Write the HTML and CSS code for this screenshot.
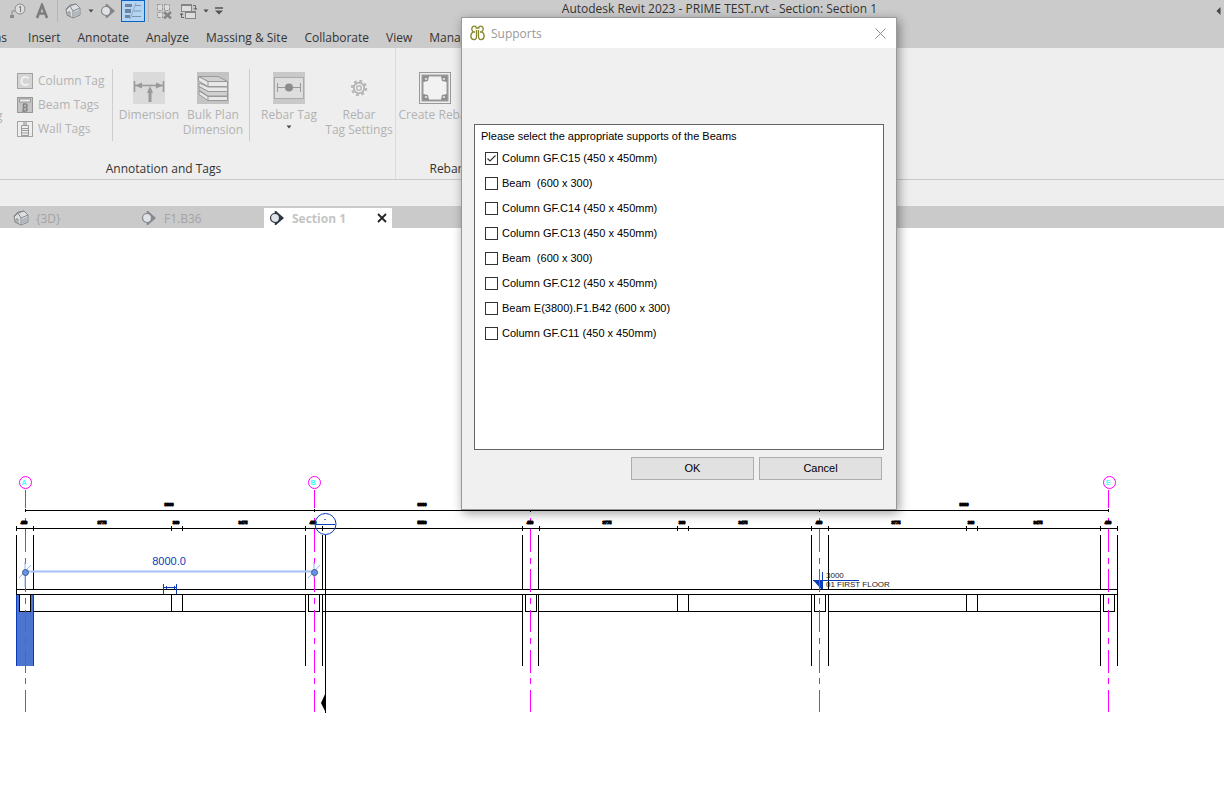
FILE: index.html
```html
<!DOCTYPE html>
<html lang="en">
<head>
  <meta charset="UTF-8">
  <title>Autodesk Revit 2023 - PRIME TEST.rvt - Section: Section 1</title>
  <link rel="stylesheet" href="styles.css">
</head>
<body>
  <!-- Shared shapes -->
  <svg class="defs" aria-hidden="true">
    <symbol id="house" viewBox="0 0 16 16">
      <path d="M1 6 L5 2 L11 1 L15 5 L15 12 L8 15 L2 12 Z" fill="#dcdee0" stroke="#85898d"/>
      <path d="M1 7 L5 3 L8 8 L8 15 M5 3 L11 1 M8 8 L15 5 M3 13 V9 L5 9 V14" fill="none" stroke="#85898d"/>
      <path d="M9 9 L14 7 V12 L9 14 Z" fill="#b4b9bd"/>
    </symbol>
    <symbol id="section" viewBox="0 0 16 16">
      <path d="M7 1 L15 8 L7 15 Z" fill="currentColor"/>
      <circle cx="6" cy="8" r="4.500" fill="#dfe3e8" stroke="currentColor" stroke-width="1.200"/>
      <path d="M6.500 1 V4 M6.500 12 V15" stroke="currentColor" stroke-width="1.500"/>
    </symbol>
    <symbol id="caret" viewBox="0 0 6 4">
      <path d="M0.500 0.500 H5.500 L3 3.500 Z" fill="#4a4a4a"/>
    </symbol>
  </svg>

  <div class="app">
    <!-- Quick access bar -->
    <header class="title-bar">
      <div class="quick-bar">
        <button class="quick-button" aria-label="Tag">
          <svg width="16" height="16" viewBox="0 0 16 16"><circle cx="10" cy="6" r="5" fill="#dcdcdc" stroke="#8b8b8b"/><path d="M9 4.500 L10.500 3.500 V9" fill="none" stroke="#777"/><path d="M5 8 H2 V13" fill="none" stroke="#8b8b8b"/><rect x="0" y="12" width="4" height="3" fill="#8b8b8b"/></svg>
        </button>
        <button class="quick-button" aria-label="Text">
          <svg width="14" height="16" viewBox="0 0 14 16"><path d="M2 15 L7 2 L12 15 M4 10.500 H10" fill="none" stroke="#7d7d7d" stroke-width="2.600"/></svg>
        </button>
        <span class="quick-separator"></span>
        <button class="quick-button" aria-label="Default 3D view"><svg width="16" height="16"><use href="#house"/></svg></button>
        <button class="quick-caret" aria-label="3D view options"><svg width="6" height="4"><use href="#caret"/></svg></button>
        <button class="quick-button" aria-label="Section"><svg width="16" height="16"><use href="#section"/></svg></button>
        <button class="quick-button active" aria-label="Thin lines">
          <svg width="18" height="16" viewBox="0 0 18 16"><path d="M1 2.500 H8 M1 13.500 H6" stroke="#6b84a0" stroke-width="3"/><path d="M1 8 H7" stroke="#6b84a0" stroke-width="4"/><path d="M11 2.500 H17 M10 8 H17 M8 13.500 H17" stroke="#7b92ab"/><path d="M12 0 L6 16" stroke="#8ea6c0"/></svg>
        </button>
        <span class="quick-separator"></span>
        <button class="quick-button" aria-label="Close inactive views">
          <svg width="16" height="16" viewBox="0 0 16 16"><path d="M1.500 1.500 H6.500 V7.500 H1.500 Z M8.500 1.500 H13.500 V7.500 H8.500 Z M1.500 9.500 H6.500 V14.500 H1.500 Z" fill="#dcdcdc" stroke="#999" stroke-dasharray="3 1"/><path d="M8 9 L15 15.500 M15 9 L8 15.500" stroke="#858585" stroke-width="2.400"/></svg>
        </button>
        <button class="quick-button" aria-label="Switch windows">
          <svg width="17" height="17" viewBox="0 0 17 17"><rect x="1.500" y="1.500" width="10" height="7" fill="#ddd" stroke="#858585"/><path d="M1 2 H12" stroke="#858585" stroke-width="2"/><rect x="5.500" y="8.500" width="10" height="7" fill="#ddd" stroke="#858585"/><path d="M5 9 H16" stroke="#858585" stroke-width="2"/><path d="M13 2.500 H15.500 V6 M13.500 5 L15.500 7 L17 5 M1.500 11 V14.500 H4 M0 12 L1.500 10 L3 12" fill="none" stroke="#666"/></svg>
        </button>
        <button class="quick-caret" aria-label="Window list"><svg width="6" height="4"><use href="#caret"/></svg></button>
        <button class="quick-caret customize" aria-label="Customize">
          <svg width="10" height="8" viewBox="0 0 10 8"><path d="M1 1 H9" stroke="#555" stroke-width="1.500"/><path d="M1 3.500 H9 L5 7.500 Z" fill="#555"/></svg>
        </button>
      </div>
      <div class="title-text">Autodesk Revit 2023 - PRIME TEST.rvt - Section: Section 1</div>
      <svg class="title-arrow" width="5" height="8" viewBox="0 0 5 8"><path d="M4.500 0 V8 L0.500 4 Z" fill="#444"/></svg>
    </header>

    <!-- Ribbon tabs -->
    <nav class="menu-bar">
      <a class="menu-item cut" href="#">ns</a>
      <a class="menu-item" href="#">Insert</a>
      <a class="menu-item" href="#">Annotate</a>
      <a class="menu-item" href="#">Analyze</a>
      <a class="menu-item" href="#">Massing &amp; Site</a>
      <a class="menu-item" href="#">Collaborate</a>
      <a class="menu-item" href="#">View</a>
      <a class="menu-item" href="#">Manage</a>
    </nav>

    <!-- Ribbon -->
    <div class="ribbon">
      <section class="group annotation-group">
        <div class="group-tools">
          <span class="cut-label">g</span>
          <div class="tag-list">
            <button class="tag-button">
              <svg width="16" height="16" viewBox="0 0 16 16"><rect x="0.500" y="0.500" width="15" height="15" fill="#d4d4d4" stroke="#a2a2a2"/><path d="M11.500 5.500 A4 4 0 1 0 11.500 10.500" fill="none" stroke="#f0f0f0" stroke-width="2"/></svg>
              Column Tag
            </button>
            <button class="tag-button">
              <svg width="16" height="16" viewBox="0 0 16 16"><rect x="0.500" y="0.500" width="15" height="15" fill="#c4c4c4" stroke="#989898"/><rect x="2.500" y="2" width="11" height="3" fill="#eee" stroke="#999"/><path d="M6 7 H9 A2 2 0 0 1 9 10.500 H6 M9 10.500 A2 2 0 0 1 9 14 H5 M6.500 7 V14" fill="none" stroke="#858585" stroke-width="1.600"/></svg>
              Beam Tags
            </button>
            <button class="tag-button">
              <svg width="16" height="16" viewBox="0 0 16 16"><rect x="0.500" y="0.500" width="15" height="15" fill="#eee" stroke="#a2a2a2"/><path d="M4.500 4.500 H11.500 V14.500 H4.500 Z M4 7.500 H12 M4 9.500 H12 M4 12 H12" fill="none" stroke="#999"/><rect x="6" y="1" width="4" height="3" fill="#bbb"/></svg>
              Wall Tags
            </button>
          </div>
          <span class="tool-separator"></span>
          <button class="tool-button">
            <svg width="32" height="32" viewBox="0 0 32 32"><rect width="32" height="32" fill="#dadada"/><path d="M1.500 9 V20 M30.500 9 V20 M2 13.500 H30" stroke="#999" stroke-width="1.500"/><path d="M2 13.500 L9 10.500 V16.500 Z M30 13.500 L23 10.500 V16.500 Z M17 14 L20 21 H14 Z" fill="#999"/><path d="M17 17 V30" stroke="#999" stroke-width="3"/></svg>
            <span>Dimension</span>
          </button>
          <button class="tool-button">
            <svg width="32" height="32" viewBox="0 0 32 32"><rect width="32" height="32" fill="#c3c3c3"/><g fill="#e8e8e8" stroke="#999"><path d="M2 22.500 L11 28.500 H30.500 V24.500 H11 L2 19 Z"/><path d="M11 24.500 V28.500"/><path d="M2 14.500 L11 19.500 H30.500 V15 H11 L2 11 Z"/><path d="M2 14.500 V18 L11 24 H30.500 V19.500 H11 Z" fill="#d0d0d0"/><path d="M1.500 4.500 L11 9.500 H30.500 L21 4.500 Z" fill="#d0d0d0"/><path d="M1.500 4.500 V9 L11 14.500 H30.500 V9.500 H11 Z"/><path d="M11 9.500 V14.500"/></g></svg>
            <span>Bulk Plan<br>Dimension</span>
          </button>
          <span class="tool-separator"></span>
          <button class="tool-button wide">
            <svg width="32" height="32" viewBox="0 0 32 32"><rect width="32" height="32" fill="#c9c9c9"/><rect x="1.500" y="5.500" width="29" height="21" fill="#dedede" stroke="#aaa"/><path d="M4.500 11 V20 M27.500 11 V20 M5 15.500 H27" stroke="#999"/><circle cx="16" cy="15.500" r="4" fill="#8c8c8c"/></svg>
            <span>Rebar Tag</span>
            <svg class="tool-caret" width="6" height="4"><use href="#caret"/></svg>
          </button>
          <button class="tool-button wide">
            <svg width="32" height="32" viewBox="0 0 32 32"><rect x="8" y="8" width="16" height="16" fill="#f2f2f2"/><circle cx="16" cy="16" r="7" fill="none" stroke="#b8b8b8" stroke-width="2.500" stroke-dasharray="3 2.500"/><circle cx="16" cy="16" r="5.200" fill="none" stroke="#b8b8b8" stroke-width="2"/><circle cx="16" cy="16" r="2.300" fill="none" stroke="#b8b8b8" stroke-width="1.500"/></svg>
            <span>Rebar<br>Tag Settings</span>
          </button>
        </div>
        <div class="group-label">Annotation and Tags</div>
      </section>
      <section class="group rebar-group">
        <div class="group-tools">
          <button class="tool-button wide">
            <svg width="32" height="32" viewBox="0 0 32 32"><rect x="0.500" y="0.500" width="31" height="31" fill="#f0f0f0" stroke="#999"/><rect x="3.500" y="3.500" width="25" height="25" fill="#f2f2f2" stroke="#999" stroke-width="2"/><path d="M4 4 H10 L9 9 L4 10 Z M28 4 H22 L23 9 L28 10 Z M4 28 H10 L9 23 L4 22 Z M28 28 H22 L23 23 L28 22 Z" fill="#8c8c8c"/><g fill="#d4d4d4"><circle cx="7" cy="7" r="1.300"/><circle cx="25" cy="7" r="1.300"/><circle cx="7" cy="25" r="1.300"/><circle cx="25" cy="25" r="1.300"/></g></svg>
            <span>Create Rebar</span>
          </button>
        </div>
        <div class="group-label">Rebar</div>
      </section>
    </div>

    <div class="options-bar"></div>

    <!-- View tabs -->
    <div class="view-tabs">
      <div class="view-tab">
        <svg width="16" height="16"><use href="#house"/></svg>
        <span>{3D}</span>
      </div>
      <div class="view-tab faded">
        <svg width="16" height="16"><use href="#section"/></svg>
        <span>F1.B36</span>
      </div>
      <div class="view-tab current">
        <svg width="16" height="16"><use href="#section"/></svg>
        <span>Section 1</span>
        <button class="tab-close" aria-label="Close view"><svg width="10" height="10" viewBox="0 0 10 10"><path d="M1 1 L9 9 M9 1 L1 9" stroke="#222" stroke-width="1.800"/></svg></button>
      </div>
    </div>

    <!-- Drawing area -->
    <main class="canvas">
      <svg class="drawing" role="img" aria-label="Section 1">
        <defs>
          <path id="grid-line" d="M0.500 262 V280 M0.500 290 V293 M0.500 301 V324 M0.500 330 V336 M0.500 341 V364 M0.500 370 V376 M0.500 382 V404 M0.500 410 V416 M0.500 422 V445 M0.500 450 V456 M0.500 462 V484"/>
        </defs>

        <!-- Selected column -->
        <rect class="selected" x="16" y="367" width="18" height="71"/>
        <path class="blue" d="M16.500 367 V438 M33.500 367 V438"/>
        <rect class="blank" x="19" y="367" width="12" height="17"/>

        <!-- Dimension strings -->
        <path class="ink" d="M25 282.500 H1109 M25.500 281 V284 M314.500 281 V284 M530.500 281 V284 M819.500 281 V284 M1108.500 281 V284"/>
        <path class="ink" d="M16 300.500 H1118 M16.500 298 V303 M33.500 298 V303 M171.500 298 V303 M182.500 298 V303 M305.500 298 V303 M322.500 298 V303 M522.500 298 V303 M539.500 298 V303 M677.500 298 V303 M688.500 298 V303 M811.500 298 V303 M828.500 298 V303 M966.500 298 V303 M977.500 298 V303 M1100.500 298 V303 M1117.500 298 V303"/>

        <!-- Columns -->
        <path class="ink" d="M16.500 307 V367 M33.500 307 V361 M305.500 307 V361 M322.500 307 V361 M522.500 307 V361 M538.500 307 V361 M811.500 307 V361 M828.500 307 V361 M1100.500 307 V361 M1117.500 307 V438"/>
        <path class="ink" d="M305.500 367 V438 M322.500 367 V438 M522.500 367 V438 M538.500 367 V438 M811.500 367 V438 M828.500 367 V438 M1100.500 367 V438"/>

        <!-- Slab and beams -->
        <path class="ink" d="M16 361.500 H1118 M16 366.500 H1118 M33 383.500 H305 M322 383.500 H522 M538 383.500 H811 M828 383.500 H1100"/>
        <path class="ink" d="M19.500 366 V383.500 H30.500 V366 M308.500 366 V383.500 H319.500 V366 M525.500 366 V383.500 H536.500 V366 M814.500 366 V383.500 H825.500 V366 M1103.500 366 V383.500 H1114.500 V366"/>
        <path class="ink" d="M171.500 366 V384 M182.500 366 V384 M677.500 366 V384 M688.500 366 V384 M966.500 366 V384 M977.500 366 V384"/>

        <!-- Level marker -->
        <path class="blue" d="M822.500 344 V361 M813 352.500 H859"/>
        <path class="blue-fill" d="M813 352 H823 V361 H821 Z"/>
        <text class="level-text" x="826" y="350">3000</text>
        <text class="level-text" x="826" y="359">01 FIRST FLOOR</text>

        <!-- Grids -->
        <g class="grid">
          <use href="#grid-line" x="25"/>
          <use href="#grid-line" x="314"/>
          <use href="#grid-line" x="530"/>
          <use href="#grid-line" x="819"/>
          <use href="#grid-line" x="1108"/>
          <circle cx="25.500" cy="254.500" r="6"/>
          <circle cx="314.500" cy="254.500" r="6"/>
          <circle cx="1109.500" cy="254.500" r="6"/>
        </g>
        <g class="grid-name">
          <text x="24" y="257">A</text>
          <text x="313" y="257">B</text>
          <text x="1108" y="257">E</text>
        </g>

        <!-- Dimension values -->
        <g class="dim-text">
          <text x="169" y="278">8000</text>
          <text x="422" y="278">6000</text>
          <text x="964" y="278">8000</text>
          <text x="24" y="296">450</text>
          <text x="102" y="296">3775</text>
          <text x="176" y="296">300</text>
          <text x="243" y="296">3475</text>
          <text x="313" y="296">450</text>
          <text x="422" y="296">5550</text>
          <text x="530" y="296">450</text>
          <text x="607" y="296">3775</text>
          <text x="682" y="296">300</text>
          <text x="743" y="296">3475</text>
          <text x="819" y="296">450</text>
          <text x="896" y="296">3775</text>
          <text x="971" y="296">300</text>
          <text x="1038" y="296">3475</text>
          <text x="1108" y="296">450</text>
        </g>

        <!-- Section mark -->
        <path class="ink" d="M325.500 307 V485"/>
        <path d="M326 464 V485 L321 475 Z"/>
        <circle class="blue section-head" cx="325.500" cy="296" r="10.500"/>
        <path class="blue" d="M316 296.500 H335"/>
        <rect class="selected" x="324" y="291" width="2" height="1"/>

        <!-- Temporary dimension -->
        <path class="temp-line" d="M26 343.500 H314"/>
        <path class="temp-tick" d="M25 334 V359 M19 350 L31 337 M314 334 V350 M308 350 L320 337"/>
        <circle class="grip" cx="25.500" cy="344.500" r="3"/>
        <circle class="grip" cx="314.500" cy="344.500" r="3"/>
        <text class="temp-text" x="169" y="337">8000.0</text>
        <path class="blue" d="M163.500 356 V366 M176.500 356 V366 M163 359.500 H177 M166.500 358 V361 M174.500 358 V361"/>
      </svg>
    </main>
  </div>

  <!-- Supports dialog -->
  <form class="dialog" role="dialog" aria-labelledby="dialog-title">
    <div class="dialog-bar">
      <svg width="15" height="16" viewBox="0 0 15 16"><path d="M6.500 3 C5.500 0 1 1 2 5 C2.300 6 3 6.500 3.500 7 C0 8 0 14 3.500 14.500 C6 15 6.500 13 6.500 11 V5 M8.500 3 C9.500 0 14 1 13 5 C12.700 6 12 6.500 11.500 7 C15 8 15 14 11.500 14.500 C9 15 8.500 13 8.500 11 V5 M3.500 7 H5 M10 7 H11.500 M5.500 3 H9.500" fill="none" stroke="#85852a" stroke-width="1.300"/></svg>
      <span id="dialog-title">Supports</span>
      <button type="button" class="dialog-close" aria-label="Close"><svg width="11" height="11" viewBox="0 0 11 11"><path d="M0.500 0.500 L10.500 10.500 M10.500 0.500 L0.500 10.500" stroke="#8a8a8a"/></svg></button>
    </div>
    <div class="dialog-body">
      <fieldset class="support-list">
        <legend>Please select the appropriate supports of the Beams</legend>
        <label class="support"><input type="checkbox" checked> Column GF.C15 (450 x 450mm)</label>
        <label class="support"><input type="checkbox"> Beam&nbsp; (600 x 300)</label>
        <label class="support"><input type="checkbox"> Column GF.C14 (450 x 450mm)</label>
        <label class="support"><input type="checkbox"> Column GF.C13 (450 x 450mm)</label>
        <label class="support"><input type="checkbox"> Beam&nbsp; (600 x 300)</label>
        <label class="support"><input type="checkbox"> Column GF.C12 (450 x 450mm)</label>
        <label class="support"><input type="checkbox"> Beam E(3800).F1.B42 (600 x 300)</label>
        <label class="support"><input type="checkbox"> Column GF.C11 (450 x 450mm)</label>
      </fieldset>
      <div class="dialog-actions">
        <button type="button" class="dialog-button">OK</button>
        <button type="button" class="dialog-button">Cancel</button>
      </div>
    </div>
  </form>
</body>
</html>
```

FILE: styles.css
```css
html, body {
  margin: 0;
  padding: 0;
  height: 100%;
  overflow: hidden;
  font-family: "Open Sans", "Noto Sans", sans-serif;
  font-size: 12px;
}

button {
  margin: 0;
  padding: 0;
  border: 0;
  background: none;
  font: inherit;
  color: inherit;
}

.defs {
  position: absolute;
  width: 0;
  height: 0;
}

.app {
  display: flex;
  flex-direction: column;
  height: 100%;
  background-color: #fff;
}

/* Title bar */
.title-bar {
  display: flex;
  align-items: flex-start;
  height: 22px;
  background-color: #cbcbcb;
}

.quick-bar {
  display: flex;
  align-items: center;
  padding-left: 6px;
}

.quick-button {
  display: flex;
  align-items: center;
  justify-content: center;
  width: 24px;
  height: 22px;
  color: #858585;
}

.quick-button.active {
  box-sizing: border-box;
  margin-left: 1px;
  background-color: #b4d4f4;
  border: 1px solid #0c62c4;
}

.quick-caret {
  display: flex;
  align-items: center;
  justify-content: center;
  width: 11px;
  height: 22px;
}

.quick-caret.customize {
  width: 16px;
}

.quick-separator {
  width: 1px;
  height: 22px;
  margin: 0 3px;
  background-color: #b4b4b4;
}

.title-text {
  flex: 1;
  line-height: 18px;
  text-align: center;
  color: #333;
}

.title-arrow {
  margin: 7px 3px 0 4px;
}

/* Ribbon tabs */
.menu-bar {
  display: flex;
  gap: 17px;
  height: 26px;
  background-color: #cbcbcb;
}

.menu-item {
  line-height: 32px;
  color: #333;
  text-decoration: none;
  white-space: nowrap;
}

.menu-item.cut {
  margin-left: -6px;
  margin-right: 4px;
}

/* Ribbon */
.ribbon {
  display: flex;
  height: 131px;
  background-color: #eee;
  border-bottom: 1px solid #c9c9c9;
  color: #b2b2b2;
}

.group {
  display: flex;
  flex-direction: column;
  justify-content: space-between;
  border-right: 1px solid #dcdcdc;
}

.annotation-group {
  width: 395px;
}

.group-tools {
  display: flex;
  padding: 21px 1px 0 0;
}

.cut-label {
  width: 21px;
  margin-left: -4px;
  padding-top: 39px;
  line-height: 15px;
}

.tag-list {
  flex: 1;
}

.tag-button {
  display: flex;
  align-items: center;
  gap: 5px;
  height: 24px;
  line-height: 16px;
  white-space: nowrap;
}

.tool-separator {
  width: 1px;
  height: 72px;
  margin: 0 4px;
  background-color: #cdcdcd;
}

.tool-button {
  display: flex;
  flex-direction: column;
  align-items: center;
  gap: 3px;
  width: 64px;
  padding-top: 3px;
  line-height: 15px;
  white-space: nowrap;
}

.tool-button.wide {
  width: 70px;
}

.group-label {
  padding-bottom: 1px;
  line-height: 18px;
  text-align: center;
  color: #333;
}

.annotation-group .group-label {
  padding-right: 68px;
}

.rebar-group {
  width: 100px;
  border-right: 0;
}

.rebar-group .group-tools {
  padding-left: 4px;
}

.options-bar {
  height: 26px;
  background-color: #eee;
}

/* View tabs */
.view-tabs {
  display: flex;
  align-items: flex-end;
  height: 22px;
  padding-left: 8px;
  background-color: #cacaca;
}

.view-tab {
  display: flex;
  align-items: center;
  gap: 7px;
  box-sizing: border-box;
  width: 128px;
  height: 20px;
  padding: 0 5px;
  color: #a4a4a4;
}

.view-tab.faded svg {
  color: #84888c;
}

.view-tab.current {
  background-color: #fff;
  font-weight: bold;
  color: #c4c4c4;
}

.view-tab.current svg {
  color: #2c3440;
}

.tab-close {
  display: flex;
  margin-left: auto;
}

/* Drawing */
.canvas {
  flex: 1;
  min-height: 0;
}

.drawing {
  display: block;
  width: 100%;
  height: 100%;
  font-family: "Liberation Sans", Arial, sans-serif;
}

.ink {
  fill: none;
  stroke: #000;
  shape-rendering: crispEdges;
}

.blue {
  fill: none;
  stroke: #0a3cba;
  shape-rendering: crispEdges;
}

.blue.section-head {
  shape-rendering: auto;
}

.blue-fill {
  fill: #0a3cba;
}

.selected {
  fill: #4b75cf;
}

.blank {
  fill: #fff;
}

.grid {
  fill: none;
  stroke: #f0f;
}

.grid use {
  shape-rendering: crispEdges;
}

.grid-name {
  font-size: 7px;
  font-weight: bold;
  fill: #4ff;
  text-anchor: middle;
}

.dim-text {
  font-size: 4px;
  font-weight: bold;
  stroke: #000;
  text-anchor: middle;
}

.level-text {
  font-size: 8px;
  fill: #222;
}

.temp-line {
  stroke: #a6c0fa;
  stroke-width: 2;
}

.temp-tick {
  fill: none;
  stroke: #8fb0f5;
}

.temp-text {
  font-size: 11px;
  fill: #0a3cba;
  text-anchor: middle;
}

.grip {
  fill: #5f94f0;
  stroke: #4a5a78;
}

/* Supports dialog */
.dialog {
  position: absolute;
  top: 17px;
  left: 461px;
  width: 434px;
  background-color: #f0f0f0;
  border: 1px solid #999;
  box-shadow: 2px 3px 10px rgba(0, 0, 0, 0.4);
}

.dialog-bar {
  display: flex;
  align-items: center;
  gap: 6px;
  height: 30px;
  padding: 0 10px 0 8px;
  background-color: #fff;
  color: #999;
}

.dialog-close {
  display: flex;
  margin-left: auto;
}

.dialog-body {
  padding: 76px 12px 29px;
  font-family: "Liberation Sans", Arial, sans-serif;
  font-size: 11px;
  color: #000;
}

.support-list {
  min-height: 324px;
  margin: 0;
  padding: 0;
  background-color: #fff;
  border: 1px solid #646464;
}

.support-list legend {
  float: left;
  box-sizing: border-box;
  width: 100%;
  height: 21px;
  padding: 0 6px;
  line-height: 23px;
}

.support {
  display: flex;
  clear: both;
  align-items: flex-start;
  gap: 4px;
  height: 25px;
  padding-left: 10px;
  line-height: 24px;
}

.support input {
  appearance: none;
  box-sizing: border-box;
  width: 13px;
  height: 13px;
  margin: 6px 0 0;
  background-color: #fff;
  border: 1px solid #333;
}

.support input:checked {
  background-image: url("data:image/svg+xml,%3Csvg xmlns='http://www.w3.org/2000/svg' viewBox='0 0 11 11'%3E%3Cpath d='M1.500 5.500 L4 8 L9.500 2.500' fill='none' stroke='%23333' stroke-width='1.200'/%3E%3C/svg%3E");
}

.dialog-actions {
  display: flex;
  justify-content: flex-end;
  gap: 5px;
  padding: 7px 2px 0 0;
}

.dialog-button {
  width: 123px;
  height: 23px;
  padding-bottom: 2px;
  background-color: #e1e1e1;
  border: 1px solid #adadad;
}
```
